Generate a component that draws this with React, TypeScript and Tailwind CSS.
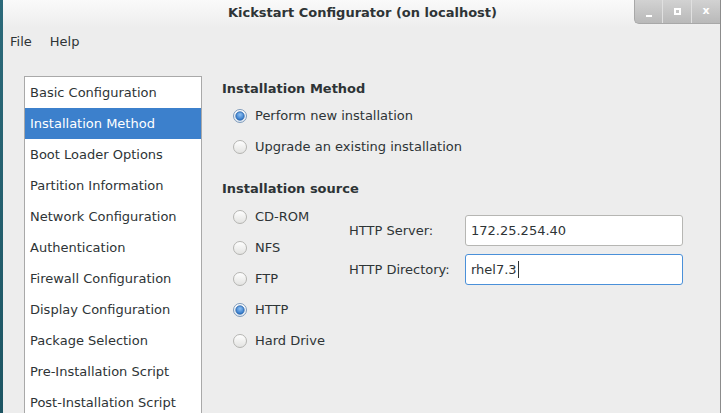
import React from "react";

const sections = [
  "Basic Configuration",
  "Installation Method",
  "Boot Loader Options",
  "Partition Information",
  "Network Configuration",
  "Authentication",
  "Firewall Configuration",
  "Display Configuration",
  "Package Selection",
  "Pre-Installation Script",
  "Post-Installation Script",
];

function Radio({ checked }: { checked?: boolean }) {
  return (
    <svg width="14" height="14" viewBox="0 0 14 14" className="shrink-0">
      <defs>
        <linearGradient id={checked ? "rg-on" : "rg-off"} x1="0" y1="0" x2="0" y2="1">
          <stop offset="0" stopColor="#ffffff" />
          <stop offset="1" stopColor={checked ? "#dfe7f0" : "#e2e2e0"} />
        </linearGradient>
        <radialGradient id="dot" cx="0.5" cy="0.35" r="0.6">
          <stop offset="0" stopColor="#8ec0f2" />
          <stop offset="1" stopColor="#2f76c8" />
        </radialGradient>
      </defs>
      <circle
        cx="7"
        cy="7"
        r="6.5"
        fill={`url(#${checked ? "rg-on" : "rg-off"})`}
        stroke={checked ? "#7f9bbb" : "#b4b4b1"}
      />
      {checked && <circle cx="7" cy="7" r="4.2" fill="url(#dot)" stroke="#2b64a8" strokeWidth="0.8" />}
    </svg>
  );
}

function RadioRow({ label, checked }: { label: string; checked?: boolean }) {
  return (
    <div className="h-[31px] flex items-center gap-[8px]">
      <Radio checked={checked} />
      <span>{label}</span>
    </div>
  );
}

export default function App() {
  return (
    <div
      className="w-[721px] h-[413px] overflow-hidden flex bg-[#ededed] text-[#2e3436] text-[13px]"
      style={{ fontFamily: '"DejaVu Sans", sans-serif' }}
    >
      {/* desktop edge */}
      <div className="w-[3px] bg-gradient-to-b from-[#2c6a7a] to-[#1d5563]" />

      <div className="flex-1 flex flex-col border-r border-[#8c8c8c]">
        {/* title bar */}
        <div className="h-[28px] relative flex items-center justify-center bg-gradient-to-b from-[#fafafa] to-[#ededed]">
          <span className="font-bold text-[13px] text-[#2e3436] -mt-[2px] ml-[2px]">
            Kickstart Configurator (on localhost)
          </span>
          <div className="absolute right-0 top-0 h-[24px] flex rounded-bl-[5px] overflow-hidden border-l border-b border-[#a8a8a8] bg-gradient-to-b from-[#d2d2d2] to-[#b9b9b9]">
            <div className="w-[28px] flex items-end justify-center pb-[6px] border-r border-[#e0e0e0]">
              <div className="w-[6px] h-[2px] bg-white" />
            </div>
            <div className="w-[29px] flex items-center justify-center border-r border-[#e0e0e0]">
              <div className="w-[7px] h-[7px] border-2 border-white" />
            </div>
            <div className="w-[28px] flex items-center justify-center text-white font-bold text-[11px]">
              x
            </div>
          </div>
        </div>

        {/* menu bar */}
        <div className="h-[28px] flex items-center gap-[18px] pl-[7px] text-[13px]">
          <span>File</span>
          <span>Help</span>
        </div>

        {/* body */}
        <div className="flex-1 flex pt-[20px] pl-[21px] gap-[20px] min-h-0">
          <div className="w-[178px] bg-white border border-[#a9a9a9] border-b-0 self-stretch">
            {sections.map((s, i) => (
              <div
                key={s}
                className={`h-[31px] flex items-center pl-[5px] ${
                  i === 1 ? "bg-[#3c80cc] text-white" : ""
                }`}
              >
                {s}
              </div>
            ))}
          </div>

          <div className="flex flex-col pt-[1px]">
            <div className="h-[23px] flex items-center font-bold">Installation Method</div>
            <div className="pl-[11px]">
              <RadioRow label="Perform new installation" checked />
              <RadioRow label="Upgrade an existing installation" />
            </div>

            <div className="h-[22px] mt-[16px] flex items-center font-bold">Installation source</div>
            <div className="flex pl-[11px] mt-[1px]">
              <div className="w-[116px]">
                <RadioRow label="CD-ROM" />
                <RadioRow label="NFS" />
                <RadioRow label="FTP" />
                <RadioRow label="HTTP" checked />
                <RadioRow label="Hard Drive" />
              </div>
              <div className="pt-[14px] flex flex-col gap-[8px]">
                <div className="flex items-center">
                  <span className="w-[116px]">HTTP Server:</span>
                  <div className="w-[218px] h-[31px] bg-white border border-[#b6b6b3] rounded-[3px] flex items-center px-[5px]">
                    172.25.254.40
                  </div>
                </div>
                <div className="flex items-center">
                  <span className="w-[116px]">HTTP Directory:</span>
                  <div className="w-[218px] h-[31px] bg-white border border-[#4a90d9] rounded-[3px] flex items-center px-[5px]">
                    rhel7.3
                    <span className="ml-[1px] w-[1px] h-[17px] bg-[#2e3436]" />
                  </div>
                </div>
              </div>
            </div>
          </div>
        </div>
      </div>
    </div>
  );
}
